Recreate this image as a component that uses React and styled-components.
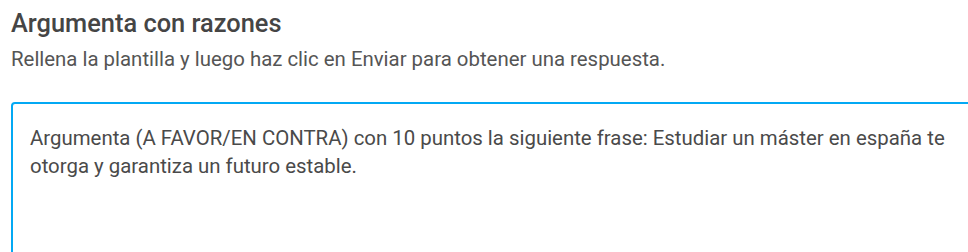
import React from 'react';
import styled, { createGlobalStyle } from 'styled-components';

const GlobalStyle = createGlobalStyle`
    body {
        margin: 0;
        background: #ffffff;
        font-family: Roboto, "Noto Sans", sans-serif;
    }
`;

const Wrapper = styled.div`
    padding: 8px 0 0 11px;
    height: 252px;
    box-sizing: border-box;
    overflow: hidden;
`;

const Title = styled.h2`
    margin: 0;
    font-size: 25.4px;
    font-weight: 500;
    line-height: 30px;
    color: #454545;
`;

const Subtitle = styled.p`
    margin: 7px 0 0;
    font-size: 20.4px;
    line-height: 28px;
    color: #555555;
`;

const Template = styled.div`
    margin-top: 29px;
    width: 990px;
    height: 180px;
    box-sizing: border-box;
    border: 2px solid #03a9f4;
    border-radius: 4px;
    padding: 20px 17px;
    font-size: 20.4px;
    line-height: 28px;
    color: #4a4a4a;
`;

const TemplateText = styled.p`
    margin: 0;
    max-width: 930px;
`;

const App = () => {
    return (
        <Wrapper>
            <GlobalStyle />
            <Title>Argumenta con razones</Title>
            <Subtitle>Rellena la plantilla y luego haz clic en Enviar para obtener una respuesta.</Subtitle>
            <Template>
                <TemplateText>
                    Argumenta (A FAVOR/EN CONTRA) con 10 puntos la siguiente frase: Estudiar un máster en españa te otorga y garantiza un futuro estable.
                </TemplateText>
            </Template>
        </Wrapper>
    );
}

export default App;
